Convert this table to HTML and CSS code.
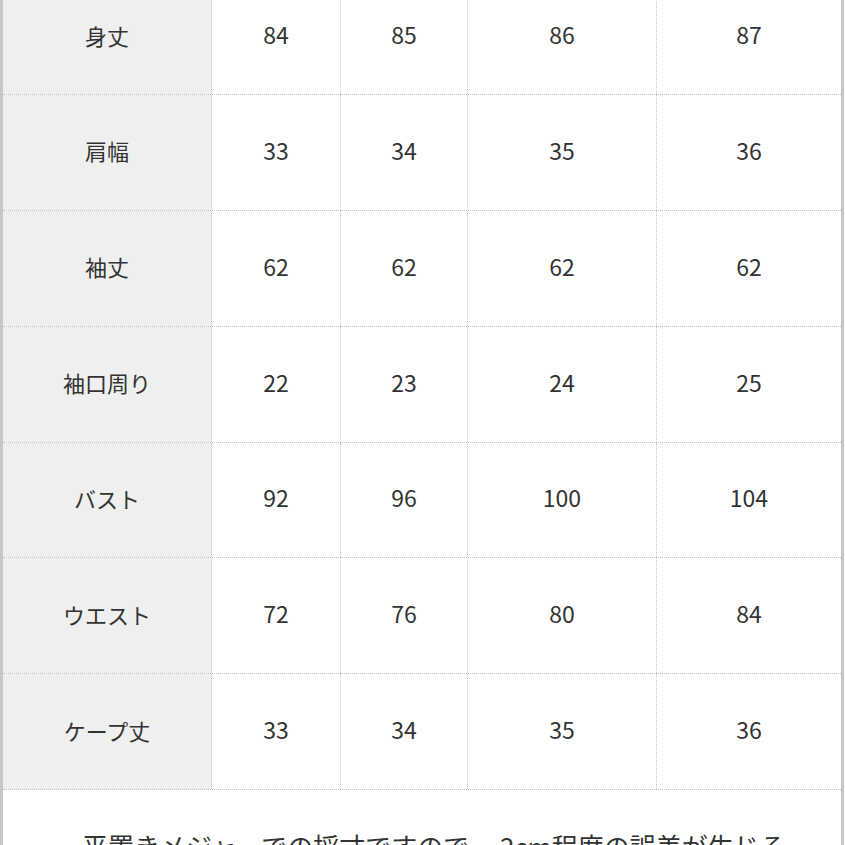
FILE: index.html
```html
<!DOCTYPE html>
<html lang="ja">
<head>
<meta charset="utf-8">
<title>サイズ表</title>
<link rel="stylesheet" href="styles.css">
</head>
<body>
<div class="sheet">
  <div class="table">
    <div class="row"><div class="cell head">身丈</div><div class="cell">84</div><div class="cell">85</div><div class="cell">86</div><div class="cell">87</div></div>
    <div class="row"><div class="cell head">肩幅</div><div class="cell">33</div><div class="cell">34</div><div class="cell">35</div><div class="cell">36</div></div>
    <div class="row"><div class="cell head">袖丈</div><div class="cell">62</div><div class="cell">62</div><div class="cell">62</div><div class="cell">62</div></div>
    <div class="row"><div class="cell head">袖口周り</div><div class="cell">22</div><div class="cell">23</div><div class="cell">24</div><div class="cell">25</div></div>
    <div class="row"><div class="cell head">バスト</div><div class="cell">92</div><div class="cell">96</div><div class="cell">100</div><div class="cell">104</div></div>
    <div class="row"><div class="cell head">ウエスト</div><div class="cell">72</div><div class="cell">76</div><div class="cell">80</div><div class="cell">84</div></div>
    <div class="row"><div class="cell head">ケープ丈</div><div class="cell">33</div><div class="cell">34</div><div class="cell">35</div><div class="cell">36</div></div>
  </div>
  <p class="note"><span class="bullet"></span>平置きメジャーでの採寸ですので、 2cm程度の誤差が生じる</p>
</div>
</body>
</html>
```
FILE: styles.css
```css
html, body {
  margin: 0;
  padding: 0;
  background: #ffffff;
  overflow: hidden;
}
body {
  font-family: "Noto Sans CJK JP", "Noto Sans", sans-serif;
  color: #333333;
}
.sheet {
  width: 838px;
  height: 900px;
  border-left: 3px solid #c6c6c6;
  border-right: 3px solid #c6c6c6;
}
.table {
  margin-top: -20.8px;
}
.row {
  display: grid;
  grid-template-columns: 209px 129px 127px 189px 184px;
  height: 115.83px;
  box-sizing: border-box;
  border-bottom: 1px dotted #bdbdbd;
}
.cell {
  display: flex;
  align-items: center;
  justify-content: center;
  box-sizing: border-box;
  border-right: 1px dotted #c4c4c4;
  font-size: 23px;
  line-height: 1;
  padding-bottom: 4px;
}
.cell:last-child {
  border-right: none;
}
.head {
  background: #efefef;
  font-size: 22px;
}
.note {
  margin: 0;
  padding: 40px 0 0 54px;
  font-size: 26px;
  line-height: 1.2;
  white-space: nowrap;
  display: flex;
  align-items: flex-end;
}
.bullet {
  display: inline-block;
  width: 8px;
  height: 8px;
  border-radius: 50%;
  background: #f1e7bd;
  margin-right: 17px;
  margin-bottom: 2px;
}
```
